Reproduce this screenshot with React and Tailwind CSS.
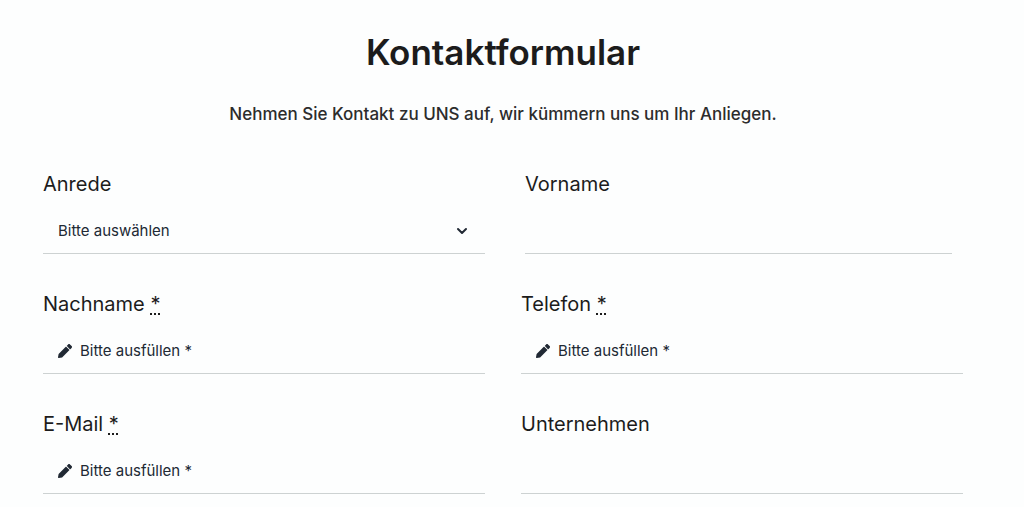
import React from 'react';
import { ChevronDown } from 'lucide-react';

const FIELDS = [
  { id: 'anrede', label: 'Anrede', type: 'select' },
  { id: 'vorname', label: 'Vorname', type: 'text', inset: true },
  { id: 'nachname', label: 'Nachname', type: 'text', required: true },
  { id: 'telefon', label: 'Telefon', type: 'tel', required: true },
  { id: 'email', label: 'E-Mail', type: 'email', required: true },
  { id: 'unternehmen', label: 'Unternehmen', type: 'text' },
];

function PencilIcon() {
  return (
    <svg viewBox="0 0 512 512" className="mr-2 size-[14px] shrink-0 fill-[#212934]" aria-hidden="true">
      <path d="M498 142l-46 46c-5 5-12 5-17 0L324 77c-5-5-5-12 0-17l46-46c19-19 49-19 68 0l60 60c19 19 19 49 0 68zM284 100L22 362 0 484c-3 17 11 31 28 28l122-22 262-262c5-5 5-12 0-17L301 100c-5-5-12-5-17 0z" />
    </svg>
  );
}

function Field({ id, label, type, required, inset }) {
  return (
    <div className={inset ? 'ml-1 mr-[11px] min-w-0' : 'min-w-0'}>
      <label htmlFor={id} className="mb-[11px] block text-xl leading-7 text-[#1c1c1c]">
        {label}
        {required && <> <abbr title="Pflichtfeld" className="underline decoration-dotted decoration-2 underline-offset-2">*</abbr></>}
      </label>
      <div className="relative flex h-[45px] items-center border-b border-[#cdd2d2] px-[15px] text-[15px] text-[#212934]">
        {type === 'select' ? (
          <>
            <select id={id} name={id} className="w-full appearance-none bg-transparent outline-none">
              <option>Bitte auswählen</option>
              <option>Frau</option>
              <option>Herr</option>
            </select>
            <ChevronDown size={16} strokeWidth={3} className="pointer-events-none absolute right-[15px]" />
          </>
        ) : (
          <>
            {required && <PencilIcon />}
            <input
              id={id}
              name={id}
              type={type}
              required={required}
              placeholder={required ? 'Bitte ausfüllen *' : undefined}
              className="w-full min-w-0 bg-transparent outline-none placeholder:text-[#212934]"
            />
          </>
        )}
      </div>
    </div>
  );
}

export default function App() {
  return (
    <main className="min-h-screen bg-[#fdfefe] pt-8 pr-[61px] pb-3 pl-[43px] font-['Inter',sans-serif]">
      <h1 className="text-center text-[35px] leading-10 font-semibold text-[#1c1c1c]">Kontaktformular</h1>
      <p className="mt-[30px] text-center text-[17px] leading-6 font-medium text-[#2c2c2c]">
        Nehmen Sie Kontakt zu UNS auf, wir kümmern uns um Ihr Anliegen.
      </p>
      <form className="mt-11 grid grid-cols-2 gap-9">
        {FIELDS.map((f) => <Field key={f.id} {...f} />)}
      </form>
    </main>
  );
}
